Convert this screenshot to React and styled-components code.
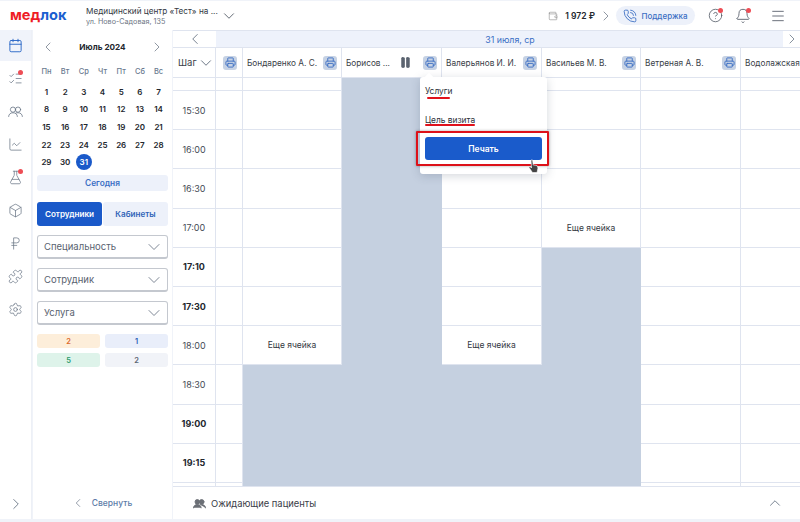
import styled, { createGlobalStyle } from "styled-components";
import {
  Bell, Box, Calendar, ChartLine, ChevronDown, ChevronLeft, ChevronRight, ChevronUp,
  CircleHelp, FlaskConical, ListChecks, Menu, Pause, PhoneCall, Printer, Puzzle,
  RussianRuble, Settings, Wallet,
} from "lucide-react";

const GlobalStyles = createGlobalStyle`
  html, body { margin: 0; padding: 0; background: #fff; }
  body { font-family: Inter, "Noto Sans", sans-serif; color: #2b3038; }
  * { box-sizing: border-box; }
`;

const Page = styled.div`
  width: 800px;
  height: 522px;
  overflow: hidden;
  display: flex;
  flex-direction: column;
  background: #f0f3f9;
  padding-top: 1px;
`;

const Header = styled.header`
  height: 29px;
  flex: none;
  background: #fff;
  display: flex;
  align-items: center;
  padding: 0 14px 0 10px;
`;

const Logo = styled.div`
  width: 76px;
  flex: none;
  font-size: 14.6px;
  font-weight: 700;
  color: #1b5fd0;
  line-height: 1;
  span { color: #ee1c25; }
`;

const Clinic = styled.div`
  width: 134px;
  flex: none;
  display: flex;
  flex-direction: column;
  gap: 1px;
`;

const ClinicName = styled.div`
  font-size: 8.2px;
  line-height: 12px;
  color: #33383f;
  white-space: nowrap;
`;

const ClinicAddress = styled.div`
  font-size: 7.2px;
  line-height: 8px;
  color: #6d7684;
`;

const HeaderRight = styled.div`
  margin-left: auto;
  display: flex;
  align-items: center;
`;

const Balance = styled.div`
  display: flex;
  align-items: center;
  font-size: 8.6px;
  font-weight: 600;
  color: #23272e;
  svg:first-child { margin-right: 7px; }
  svg:last-child { margin-left: 3px; }
`;

const Support = styled.div`
  height: 19px;
  width: 79px;
  border-radius: 10px;
  background: #edf1fa;
  color: #3b6fc4;
  display: flex;
  align-items: center;
  justify-content: center;
  gap: 4px;
  font-size: 8px;
  font-weight: 500;
  margin-left: 2px;
`;

const HeaderIcon = styled.div`
  position: relative;
  display: flex;
  margin-left: ${(p) => p.$gap}px;
  color: #555c68;
`;

const Dot = styled.i`
  position: absolute;
  top: ${(p) => p.$top}px;
  right: ${(p) => p.$right}px;
  width: 5px;
  height: 5px;
  border-radius: 50%;
  background: #ee4d55;
`;

const Body = styled.div`
  flex: 1;
  min-height: 0;
  display: flex;
  gap: 1px;
  padding-bottom: 3px;
`;

const Rail = styled.nav`
  width: 32px;
  flex: none;
  background: #fff;
  display: flex;
  flex-direction: column;
  border-right: 1px solid #edf0f6;
`;

const RailItem = styled.div`
  position: relative;
  height: 31px;
  flex: none;
  margin-bottom: 2px;
  width: 31px;
  display: flex;
  align-items: center;
  justify-content: center;
  color: ${(p) => (p.$active ? "#2a66c6" : "#6a7686")};
  background: ${(p) => (p.$active ? "#f0f3fa" : "transparent")};
`;

const RailBottom = styled.div`
  margin-top: auto;
  height: 30px;
  width: 31px;
  display: flex;
  align-items: center;
  justify-content: center;
  color: #6a7686;
`;

const Side = styled.aside`
  width: 139px;
  flex: none;
  background: #fff;
  padding: 0 4px;
  display: flex;
  flex-direction: column;
`;

const MonthRow = styled.div`
  height: 33px;
  display: flex;
  align-items: center;
  justify-content: space-between;
  padding: 0 3px;
  font-size: 8.2px;
  font-weight: 700;
  color: #23272e;
  margin-bottom: 2px;
  svg { color: #737d8c; }
`;

const DaysGrid = styled.div`
  display: grid;
  grid-template-columns: repeat(7, 18.7px);
  justify-content: center;
  grid-auto-rows: 17.7px;
  font-size: 8px;
  font-weight: 600;
  color: #23272e;
  margin-bottom: 4px;
`;

const WeekDay = styled.div`
  display: flex;
  align-items: center;
  justify-content: center;
  font-size: 7.5px;
  font-weight: 500;
  color: #6a7a90;
  height: 12px;
  margin-bottom: 11px;
`;

const Day = styled.div`
  display: flex;
  align-items: center;
  justify-content: center;
  span {
    width: 16px;
    height: 16px;
    display: flex;
    align-items: center;
    justify-content: center;
    border-radius: 50%;
    background: ${(p) => (p.$selected ? "#1a59c9" : "transparent")};
    color: ${(p) => (p.$selected ? "#fff" : "inherit")};
  }
`;

const TodayButton = styled.div`
  height: 16px;
  border-radius: 3px;
  background: #edf1fa;
  color: #3b6fc4;
  display: flex;
  align-items: center;
  justify-content: center;
  font-size: 8.3px;
  font-weight: 600;
  margin-bottom: 11px;
`;

const Tabs = styled.div`
  display: flex;
  gap: 1px;
  height: 24px;
  margin-bottom: 9px;
`;

const Tab = styled.div`
  flex: 1;
  border-radius: 3px;
  background: ${(p) => (p.$active ? "#1a59c9" : "#edf1fa")};
  color: ${(p) => (p.$active ? "#fff" : "#2f63b8")};
  display: flex;
  align-items: center;
  justify-content: center;
  font-size: 8.1px;
  font-weight: 600;
`;

const Select = styled.div`
  height: 24px;
  border: 1px solid #c4c8cf;
  border-bottom-width: 2px;
  border-radius: 3px;
  display: flex;
  align-items: center;
  justify-content: space-between;
  padding: 0 3px 0 6px;
  font-size: 9.5px;
  color: #59626f;
  margin-bottom: 9px;
  svg { color: #737d8c; }
`;

const Badges = styled.div`
  display: grid;
  grid-template-columns: 63px 63px;
  gap: 5px;
  grid-auto-rows: 14px;
`;

const Badge = styled.div`
  border-radius: 3px;
  background: ${(p) => p.$bg};
  color: ${(p) => p.$fg};
  display: flex;
  align-items: center;
  justify-content: center;
  font-size: 7.5px;
  font-weight: 600;
`;

const Collapse = styled.div`
  margin-top: auto;
  height: 33px;
  display: flex;
  align-items: center;
  justify-content: center;
  gap: 5px;
  font-size: 8.5px;
  font-weight: 500;
  color: #5d7da8;
  padding-right: 2px;
`;

const Schedule = styled.main`
  flex: 1;
  min-width: 0;
  position: relative;
  display: flex;
  flex-direction: column;
  background: #fff;
`;

const DateBar = styled.div`
  height: 18px;
  flex: none;
  display: flex;
  border-top: 1px solid #dfe4ef;
  border-bottom: 1px solid #dfe4ef;
`;

const DateNav = styled.div`
  width: ${(p) => p.$w}px;
  flex: none;
  display: flex;
  align-items: center;
  justify-content: center;
  color: #6a7686;
`;

const DateLabel = styled.div`
  flex: 1;
  background: #eef2fb;
  color: #3b6fc4;
  font-size: 8.8px;
  display: flex;
  align-items: center;
  justify-content: center;
  padding-left: 21px;
`;

const Scroller = styled.div`
  flex: 1;
  min-height: 0;
  overflow: hidden;
`;

const Grid = styled.div`
  display: grid;
  grid-template-columns: 43px 27px 99px 100px 100px 99px 100px 100px;
  grid-template-rows: 30px 13px;
  grid-auto-rows: 39.2px;
  width: 668px;
`;

const Cell = styled.div`
  min-width: 0;
  border-right: 1px solid #dfe4ef;
  border-bottom: 1px solid #dfe4ef;
  background: ${(p) => (p.$busy ? "#c5d0e0" : "#fff")};
  ${(p) => p.$busy && "border-color: #c5d0e0;"}
  display: flex;
  align-items: center;
  justify-content: center;
  font-size: 8.5px;
  color: #33383f;
`;

const TimeCell = styled(Cell)`
  font-size: 9px;
  font-weight: ${(p) => (p.$bold ? 700 : 400)};
  color: ${(p) => (p.$bold ? "#23272e" : "#454b55")};
`;

const HeadCell = styled(Cell)`
  justify-content: ${(p) => (p.$end ? "flex-end" : "space-between")};
  padding: 0 ${(p) => (p.$end ? 5 : 4)}px 0 4px;
  white-space: nowrap;
  font-size: 8.25px;
  color: #3a4048;
`;

const Step = styled(HeadCell)`
  font-size: 9.5px;
  padding: 0 3px 0 5px;
  svg { color: #5e6a7a; flex: none; }
`;

const PrintButton = styled.div`
  width: 14px;
  height: 14px;
  flex: none;
  border-radius: 3px;
  background: #c6d2e4;
  color: #3b6fc4;
  display: flex;
  align-items: center;
  justify-content: center;
`;

const HeadActions = styled.div`
  display: flex;
  align-items: center;
  gap: 11px;
  svg.pause { color: #5b6470; fill: #5b6470; }
`;

const Popup = styled.div`
  position: absolute;
  left: 247px;
  top: 47px;
  width: 127px;
  height: 97px;
  background: #fff;
  border-radius: 3px;
  box-shadow: 0 2px 10px rgba(60, 72, 96, 0.22);
  padding: 6px 5px;
  display: flex;
  flex-direction: column;
  font-size: 8.4px;
  color: #2b3038;
  &::before {
    content: "";
    position: absolute;
    top: -3px;
    left: 6px;
    width: 6px;
    height: 6px;
    background: #fff;
    transform: rotate(45deg);
  }
`;

const PopupOption = styled.div`
  height: ${(p) => p.$h}px;
  margin-top: ${(p) => p.$top || 0}px;
  display: flex;
  align-items: center;
  width: max-content;
`;

const PrintAction = styled.div`
  height: 23px;
  margin-top: 6px;
  border-radius: 3px;
  background: #1a5bcb;
  color: #fff;
  font-size: 8.5px;
  font-weight: 600;
  display: flex;
  align-items: center;
  justify-content: center;
`;

const Underline = styled.div`
  position: absolute;
  left: ${(p) => p.$x}px;
  top: ${(p) => p.$y}px;
  width: ${(p) => p.$w}px;
  height: 2px;
  border-radius: 1px;
  background: #e0121c;
`;

const Highlight = styled.div`
  position: absolute;
  left: 243px;
  top: 101px;
  width: 133px;
  height: 35px;
  border: 2px solid #dd1119;
  border-radius: 1px;
  box-shadow: 0 0 3px rgba(0, 0, 0, 0.35);
`;

const Cursor = styled.svg`
  position: absolute;
  left: 355px;
  top: 129px;
`;

const Waiting = styled.div`
  flex: none;
  height: 33px;
  border-top: 1px solid #dfe4ef;
  display: flex;
  align-items: center;
  gap: 5px;
  padding: 0 16px 0 20px;
  font-size: 9.4px;
  color: #3a4048;
  background: #fff;
  svg.people { color: #6b6f76; }
  svg.up { margin-left: auto; color: #6a7686; }
`;

// two equal figures side by side, lucide's Users has a different back figure
const PeopleIcon = ({ size = 15, strokeWidth = 1, filled, className }) => (
  <svg
    className={className}
    width={size}
    height={size}
    viewBox="0 0 24 24"
    fill={filled ? "currentColor" : "none"}
    stroke="currentColor"
    strokeWidth={strokeWidth * (24 / size)}
    strokeLinecap="round"
    strokeLinejoin="round"
  >
    <circle cx="8" cy="9" r="4.2" />
    <circle cx="16" cy="9" r="4.2" />
    <path d="M1 20c0-3.6 3-6 7-6s7 2.4 7 6" />
    <path d="M13 14.3c.9-.2 2-.3 3-.3 4 0 7 2.4 7 6" />
  </svg>
);

const weekDays = ["Пн", "Вт", "Ср", "Чт", "Пт", "Сб", "Вс"];
const days = Array.from({ length: 31 }, (_, i) => i + 1);

const railIcons = [
  { Icon: Calendar, active: true },
  { Icon: ListChecks, dot: true },
  { Icon: PeopleIcon, thin: true },
  { Icon: ChartLine },
  { Icon: FlaskConical, dot: true },
  { Icon: Box },
  { Icon: RussianRuble },
  { Icon: Puzzle },
  { Icon: Settings },
];

const doctors = [
  { name: "Бондаренко А. С.", print: true },
  { name: "Борисов ...", pause: true, print: true },
  { name: "Валерьянов И. И.", print: true },
  { name: "Васильев М. В.", print: true },
  { name: "Ветреная А. В.", print: true },
  { name: "Водолажская" },
];

const times = [
  { t: "15:30" }, { t: "16:00" }, { t: "16:30" }, { t: "17:00" },
  { t: "17:10", bold: true }, { t: "17:30", bold: true }, { t: "18:00" },
  { t: "18:30" }, { t: "19:00", bold: true }, { t: "19:15", bold: true }, { t: "" },
];

// first row (in the times list) at which each doctor's column turns grey
const busyFrom = [7, -1, 7, 4, 99, 99];
const notes = { "3-3": "Еще ячейка", "6-0": "Еще ячейка", "6-2": "Еще ячейка" };

const App = () => (
  <Page>
    <GlobalStyles />
    <Header>
      <Logo><span>мед</span>лок</Logo>
      <Clinic>
        <ClinicName>Медицинский центр «Тест» на ...</ClinicName>
        <ClinicAddress>ул. Ново-Садовая, 135</ClinicAddress>
      </Clinic>
      <ChevronDown size={18} strokeWidth={1.2} color="#555c68" />
      <HeaderRight>
        <Balance>
          <Wallet size={10} strokeWidth={1.2} color="#777" />
          1 972 ₽
          <ChevronRight size={16} strokeWidth={1.2} color="#737d8c" />
        </Balance>
        <Support>
          <PhoneCall size={14} strokeWidth={1.5} />
          Поддержка
        </Support>
        <HeaderIcon $gap={13}>
          <CircleHelp size={15} strokeWidth={1.3} />
          <Dot $top={0} $right={0} />
        </HeaderIcon>
        <HeaderIcon $gap={12}>
          <Bell size={16} strokeWidth={1.3} />
          <Dot $top={0} $right={0} />
        </HeaderIcon>
        <HeaderIcon $gap={19}>
          <Menu size={16} strokeWidth={1.3} />
        </HeaderIcon>
      </HeaderRight>
    </Header>
    <Body>
      <Rail>
        {railIcons.map(({ Icon, active, dot, thin }, i) => (
          <RailItem key={i} $active={active}>
            <Icon size={15} strokeWidth={active ? 1.5 : thin ? 0.8 : 1.2} />
            {dot && <Dot $top={7} $right={8} />}
          </RailItem>
        ))}
        <RailBottom><ChevronRight size={18} strokeWidth={1.2} /></RailBottom>
      </Rail>
      <Side>
        <MonthRow>
          <ChevronLeft size={16} strokeWidth={1.2} />
          Июль 2024
          <ChevronRight size={16} strokeWidth={1.2} />
        </MonthRow>
        <DaysGrid>
          {weekDays.map((d) => <WeekDay key={d}>{d}</WeekDay>)}
          {days.map((d) => (
            <Day key={d} $selected={d === 31}><span>{d}</span></Day>
          ))}
        </DaysGrid>
        <TodayButton>Сегодня</TodayButton>
        <Tabs>
          <Tab $active>Сотрудники</Tab>
          <Tab>Кабинеты</Tab>
        </Tabs>
        {["Специальность", "Сотрудник", "Услуга"].map((s) => (
          <Select key={s}>
            {s}
            <ChevronDown size={20} strokeWidth={1.1} />
          </Select>
        ))}
        <Badges>
          <Badge $bg="#fdeeda" $fg="#dc6a2c">2</Badge>
          <Badge $bg="#e9eefa" $fg="#2f63b8">1</Badge>
          <Badge $bg="#def3ea" $fg="#2b9a6b">5</Badge>
          <Badge $bg="#f1f3f8" $fg="#5d6674">2</Badge>
        </Badges>
        <Collapse>
          <ChevronLeft size={14} strokeWidth={1.2} color="#6a7686" style={{ marginRight: 2 }} />
          Свернуть
        </Collapse>
      </Side>
      <Schedule>
        <DateBar>
          <DateNav $w={43}><ChevronLeft size={18} strokeWidth={1.2} /></DateNav>
          <DateLabel>31 июля, ср</DateLabel>
          <DateNav $w={17}><ChevronRight size={16} strokeWidth={1.2} /></DateNav>
        </DateBar>
        <Scroller>
          <Grid>
            <Step>Шаг <ChevronDown size={18} strokeWidth={1.2} /></Step>
            <HeadCell $end>
              <PrintButton><Printer size={11} strokeWidth={2} /></PrintButton>
            </HeadCell>
            {doctors.map((d) => (
              <HeadCell key={d.name}>
                {d.name}
                <HeadActions>
                  {d.pause && <Pause className="pause" size={13} strokeWidth={1.5} />}
                  {d.print && (
                    <PrintButton><Printer size={11} strokeWidth={2} /></PrintButton>
                  )}
                </HeadActions>
              </HeadCell>
            ))}
            <Cell />
            <Cell />
            {doctors.map((d, c) => <Cell key={c} $busy={busyFrom[c] === -1} />)}
            {times.map((row, r) => [
              <TimeCell key={`t${r}`} $bold={row.bold}>{row.t}</TimeCell>,
              <Cell key={`s${r}`} />,
              ...doctors.map((d, c) => (
                <Cell key={`${r}-${c}`} $busy={busyFrom[c] !== 99 && r >= busyFrom[c]}>
                  {notes[`${r}-${c}`]}
                </Cell>
              )),
            ])}
          </Grid>
        </Scroller>
        <Waiting>
          <PeopleIcon className="people" size={13} strokeWidth={1} filled />
          Ожидающие пациенты
          <ChevronUp className="up" size={18} strokeWidth={1.2} />
        </Waiting>
        <Popup>
          <PopupOption $h={16}>Услуги</PopupOption>
          <PopupOption $h={23} $top={9}>Цель визита</PopupOption>
          <PrintAction>Печать</PrintAction>
        </Popup>
        <Underline $x={254} $y={67} $w={23} />
        <Underline $x={252} $y={94} $w={50} />
        <Highlight />
        <Cursor width="11" height="14" viewBox="0 0 11 14">
          <path d="M3 1 L4.6 1 L5.2 6 L9 6.5 L10 9 L9 13.5 L4.5 13.5 L1 8.5 L2 7.5 L3.5 9 Z" fill="#444" stroke="#fff" strokeWidth="0.6" />
        </Cursor>
      </Schedule>
    </Body>
  </Page>
);

export default App;
